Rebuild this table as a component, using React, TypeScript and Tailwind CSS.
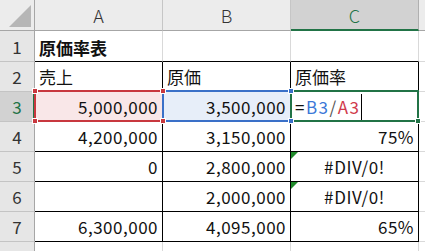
import React from "react";

type Row = {
  n: number;
  a: string;
  b: string;
  c: string;
  left?: boolean;
  err?: boolean;
};

const rows: Row[] = [
  { n: 2, a: "売上", b: "原価", c: "原価率", left: true },
  { n: 4, a: "4,200,000", b: "3,150,000", c: "75%" },
  { n: 5, a: "0", b: "2,800,000", c: "#DIV/0!", err: true },
  { n: 6, a: "", b: "2,000,000", c: "#DIV/0!", err: true },
  { n: 7, a: "6,300,000", b: "4,095,000", c: "65%" },
];

function RowHead({ n, active }: { n: number; active?: boolean }) {
  return (
    <div
      className={
        active
          ? "w-[35px] shrink-0 flex items-center justify-center border-b border-b-[#c4c4c4] border-r-2 border-r-[#217346] bg-[#d2d2d2] text-[#217346] pl-[1px]"
          : "w-[35px] shrink-0 flex items-center justify-center border-b border-b-[#c4c4c4] border-r border-r-[#a6a6a6] bg-[#e6e6e6] text-[#333]"
      }
    >
      {n}
    </div>
  );
}

function ErrMark() {
  return (
    <svg className="absolute left-0 top-0" width="8" height="8" viewBox="0 0 8 8">
      <polygon points="0,0 7,0 0,7" fill="#1f8a2a" />
    </svg>
  );
}

function Handle({ x, y, color }: { x: number; y: number; color: string }) {
  return (
    <div
      className="absolute w-[6px] h-[6px] border border-white"
      style={{ left: x - 3, top: y - 3, backgroundColor: color }}
    />
  );
}

export default function App() {
  const cell = "w-[128px] shrink-0 flex items-center px-[4px] border-r border-b";
  const data = (r: Row) => {
    const al = r.left ? "justify-start" : "justify-end tracking-[0.5px]";
    const cAl = r.err ? "justify-center tracking-[0.6px]" : al;
    return (
      <div key={r.n} className="flex h-[30px]">
        <RowHead n={r.n} />
        <div className={`${cell} ${al} border-black`}>{r.a}</div>
        <div className={`${cell} ${al} border-black`}>{r.b}</div>
        <div className={`${cell} ${cAl} border-black relative`}>
          {r.err && <ErrMark />}
          {r.c}
        </div>
        <div className="flex-1 border-b border-[#d9d9d9]" />
      </div>
    );
  };

  return (
    <div className="relative w-[425px] h-[251px] overflow-hidden bg-white text-[17px] text-[#111] font-['Noto_Sans_CJK_JP',sans-serif] leading-none">
      {/* column headers */}
      <div className="flex h-[31px] text-[#333] text-[18px] font-light">
        <div className="w-[35px] shrink-0 relative bg-[#ececec] border-r border-b border-[#a6a6a6]">
          <svg className="absolute left-0 top-0" width="34" height="30" viewBox="0 0 34 30">
            <polygon points="31,5 31,27 9,27" fill="#b6b6b6" />
          </svg>
        </div>
        <div className="w-[128px] shrink-0 flex items-center justify-center bg-[#ececec] border-r border-r-[#c6c6c6] border-b border-b-[#a6a6a6]">A</div>
        <div className="w-[128px] shrink-0 flex items-center justify-center bg-[#ececec] border-r border-r-[#c6c6c6] border-b border-b-[#a6a6a6]">B</div>
        <div className="w-[128px] shrink-0 flex items-center justify-center bg-[#d2d2d2] text-[#217346] border-r border-r-[#b0b0b0] border-b-2 border-b-[#217346] pt-[1px]">C</div>
        <div className="flex-1 bg-[#ececec] border-b border-[#a6a6a6]" />
      </div>

      {/* row 1 */}
      <div className="flex h-[31px]">
        <RowHead n={1} />
        <div className={`${cell} border-r-[#d9d9d9] border-b-black font-bold pt-[2px]`}>原価率表</div>
        <div className={`${cell} border-r-[#d9d9d9] border-b-black`} />
        <div className={`${cell} border-r-[#d9d9d9] border-b-black`} />
        <div className="flex-1 border-b border-[#d9d9d9]" />
      </div>

      {data(rows[0])}

      {/* row 3 — formula being edited */}
      <div className="flex h-[30px]">
        <RowHead n={3} active />
        <div className={`${cell} justify-end tracking-[0.5px] border-black bg-[#f9e7e8]`}>5,000,000</div>
        <div className={`${cell} justify-end tracking-[0.5px] border-black bg-[#e7eef9]`}>3,500,000</div>
        <div className={`${cell} justify-start tracking-[1.5px] border-black`}>
          <span>=</span>
          <span className="text-[#3b78d8]">B3</span>
          <span className="text-[#555]">/</span>
          <span className="text-[#d03a4c]">A3</span>
          <span className="w-[1px] h-[26px] bg-black" />
        </div>
        <div className="flex-1 border-b border-[#d9d9d9]" />
      </div>

      {rows.slice(1).map(data)}

      {/* row 8 */}
      <div className="flex h-[30px]">
        <RowHead n={8} />
        <div className={`${cell} border-[#d9d9d9]`} />
        <div className={`${cell} border-[#d9d9d9]`} />
        <div className={`${cell} border-[#d9d9d9]`} />
        <div className="flex-1" />
      </div>

      {/* reference highlights over the cells */}
      <div className="absolute left-[34px] top-[90px] w-[130px] h-[32px] border-2 border-[#c8383f]" />
      <div className="absolute left-[162px] top-[90px] w-[130px] h-[32px] border-2 border-[#3a70c8]" />
      <div className="absolute left-[290px] top-[90px] w-[129px] h-[32px] border-2 border-[#217346]" />
      <Handle x={35} y={91} color="#c8383f" />
      <Handle x={35} y={121} color="#c8383f" />
      <Handle x={163} y={91} color="#c8383f" />
      <Handle x={163} y={121} color="#c8383f" />
      <Handle x={291} y={91} color="#3a70c8" />
      <Handle x={291} y={121} color="#3a70c8" />
      <Handle x={418} y={121} color="#217346" />
    </div>
  );
}
